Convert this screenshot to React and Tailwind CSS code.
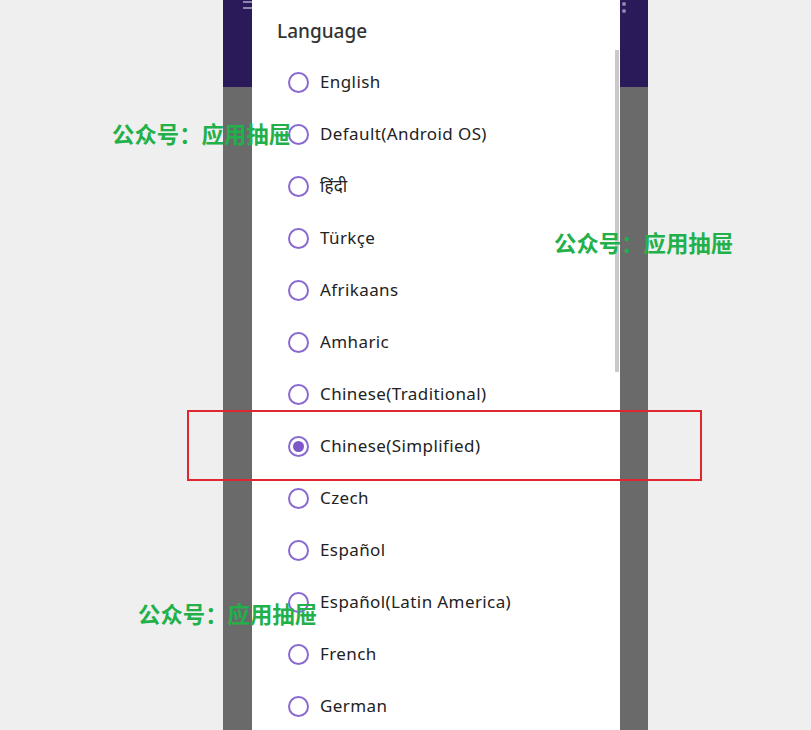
const languages = [
  "English",
  "Default(Android OS)",
  "हिंदी",
  "Türkçe",
  "Afrikaans",
  "Amharic",
  "Chinese(Traditional)",
  "Chinese(Simplified)",
  "Czech",
  "Español",
  "Español(Latin America)",
  "French",
  "German",
];

const selected = "Chinese(Simplified)";

function Radio({ checked }) {
  return (
    <span className="flex h-[21px] w-[21px] shrink-0 items-center justify-center rounded-full border-2 border-[#8a6acf]">
      {checked && <span className="h-[11px] w-[11px] rounded-full bg-[#7e57c9]" />}
    </span>
  );
}

function Watermark({ className }) {
  return (
    <div
      className={`absolute text-[22.4px] font-bold leading-none text-[#22b04a] ${className}`}
      style={{ fontFamily: '"Noto Sans CJK SC", sans-serif' }}
    >
      公众号：应用抽屉
    </div>
  );
}

export default function App() {
  return (
    <div
      className="relative h-[730px] w-[811px] overflow-hidden bg-[#efefef]"
      style={{ fontFamily: '"Noto Sans", "Noto Sans Devanagari", sans-serif' }}
    >
      <div className="relative ml-[223px] flex h-full w-[425px] flex-col">
        <div className="h-[87px] bg-[#2a1a5a]" />
        <div className="flex-1 bg-[#6a6a6a]" />

        {/* toolbar icons peeking above the dialog */}
        <div className="absolute left-[20px] top-[1px] flex flex-col gap-[4px]">
          <span className="h-[2px] w-[10px] bg-[#8f86ad]" />
          <span className="h-[2px] w-[10px] bg-[#8f86ad]" />
        </div>
        <div className="absolute left-[399px] top-[2px] flex flex-col gap-[3px]">
          <span className="h-[4px] w-[4px] rounded-full bg-[#8f86ad]" />
          <span className="h-[4px] w-[4px] rounded-full bg-[#8f86ad]" />
        </div>

        {/* dialog */}
        <div className="absolute bottom-0 left-[29px] top-0 w-[368px] bg-white">
          <div className="flex h-[56px] items-center pl-[25px] pt-[6px] text-[19px] font-medium text-[#333333]">
            Language
          </div>
          <ul>
            {languages.map((lang) => (
              <li key={lang} className="flex h-[52px] items-center gap-[11px] pl-[36px]">
                <Radio checked={lang === selected} />
                <span className="text-[17px] tracking-[0.4px] text-[#222222]">{lang}</span>
              </li>
            ))}
          </ul>
          <div className="absolute right-[1px] top-[50px] h-[322px] w-[4px] bg-[#c9c9c9]" />
        </div>
      </div>

      <Watermark className="left-[112px] top-[122px]" />
      <Watermark className="left-[554px] top-[231px]" />
      <Watermark className="left-[138px] top-[602px]" />

      <div className="absolute left-[187px] top-[410px] h-[71px] w-[515px] border-2 border-[#e0262e]" />
    </div>
  );
}
